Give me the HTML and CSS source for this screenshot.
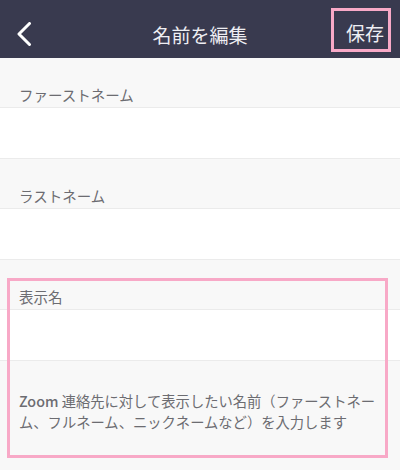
FILE: index.html
```html
<!DOCTYPE html>
<html lang="ja">
<head>
<meta charset="utf-8">
<title>名前を編集</title>
<link rel="stylesheet" href="styles.css">
</head>
<body>
<header class="topbar">
  <button class="back" aria-label="戻る">
    <svg width="16" height="24" viewBox="0 0 16 24"><polyline points="13.5,1.5 3,12 13.5,22.5" fill="none" stroke="#ffffff" stroke-width="3" stroke-linecap="round" stroke-linejoin="round"/></svg>
  </button>
  <h1 class="title">名前を編集</h1>
  <button class="save">保存</button>
</header>
<main class="form">
  <section class="field">
    <div class="label">ファーストネーム</div>
    <div class="input"></div>
  </section>
  <section class="field">
    <div class="label">ラストネーム</div>
    <div class="input"></div>
  </section>
  <div class="highlighted">
    <section class="field">
      <div class="label">表示名</div>
      <div class="input"></div>
    </section>
    <p class="hint"><span class="brand">Zoom</span> 連絡先に対して表示したい名前（ファーストネーム、フルネーム、ニックネームなど）を入力します</p>
    <div class="mark"></div>
  </div>
</main>
</body>
</html>
```
FILE: styles.css
```css
* { box-sizing: border-box; }
html, body { margin: 0; padding: 0; }
body {
  width: 400px;
  height: 470px;
  overflow: hidden;
  background: #f8f8f8;
  font-family: "Noto Sans CJK JP", "Noto Sans", sans-serif;
  color: #6c6c71;
}
.topbar {
  height: 58px;
  background: #393a4f;
  padding-top: 10px;
  display: flex;
  align-items: center;
  position: relative;
}
.back {
  background: none;
  border: 0;
  padding: 0;
  margin-left: 16px;
  width: 16px;
  height: 24px;
  display: flex;
}
.title {
  position: absolute;
  left: 0;
  right: 0;
  top: 10px;
  bottom: 0;
  margin: 0;
  display: flex;
  align-items: center;
  justify-content: center;
  font-size: 19px;
  font-weight: normal;
  color: #eeeef3;
  pointer-events: none;
}
.save {
  margin-left: auto;
  margin-right: 9px;
  margin-top: -9px;
  width: 60px;
  height: 44px;
  border: 3px solid #f8a9c7;
  background: none;
  color: #eeeef3;
  font-family: inherit;
  font-size: 19px;
  padding: 6px 0 0 8px;
  line-height: 24px;
  position: relative;
  z-index: 1;
}
.field .label {
  height: 50px;
  padding: 0 19px 2px;
  border-bottom: 1px solid #ebebeb;
  display: flex;
  align-items: flex-end;
  font-size: 14.5px;
  line-height: 20px;
  background: #f8f8f8;
}
.field .input {
  height: 51px;
  background: #ffffff;
  border-bottom: 1px solid #ebebeb;
}
.highlighted { position: relative; }
.hint {
  margin: 0;
  padding: 29px 19px 0;
  font-size: 14.3px;
  line-height: 21px;
  color: #6c6c71;
}
.brand { font-weight: 500; }
.mark {
  position: absolute;
  left: 7px;
  top: 18px;
  width: 381px;
  height: 180px;
  border: 3px solid #f8a9c7;
  pointer-events: none;
}
```
